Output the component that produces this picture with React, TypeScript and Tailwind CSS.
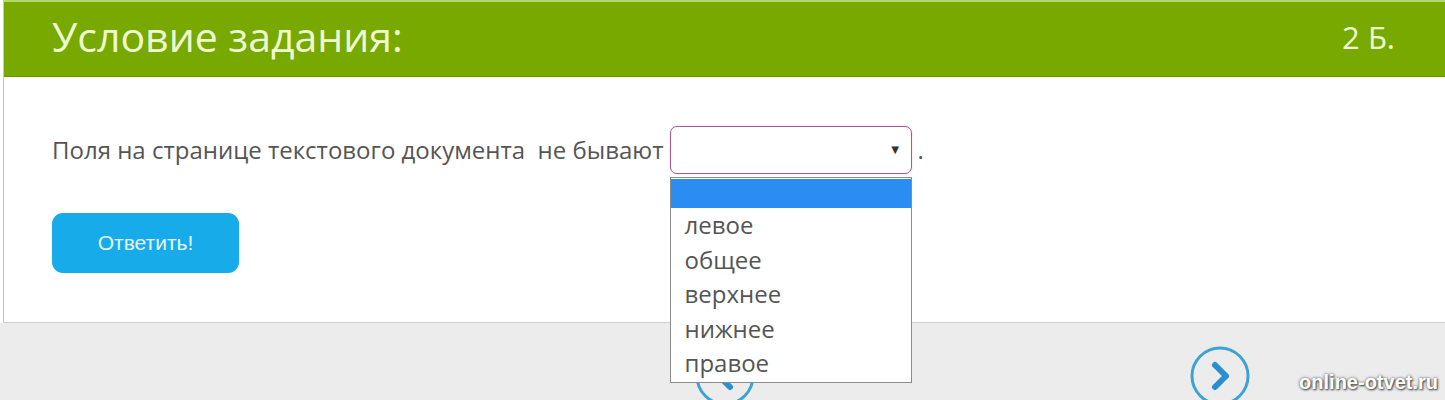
import React from "react";

function NavCircle({ dir }: { dir: "left" | "right" }) {
  return (
    <svg width="62" height="62" viewBox="0 0 62 62">
      <circle cx="31" cy="31" r="28" fill="none" stroke="#3ea3d3" strokeWidth="3" />
      {dir === "right" ? (
        <path d="M26 20 L37 31 L26 42" fill="none" stroke="#2a8fd0" strokeWidth="6" strokeLinecap="round" strokeLinejoin="round" />
      ) : (
        <path d="M36 20 L25 31 L36 42" fill="none" stroke="#2a8fd0" strokeWidth="6" strokeLinecap="round" strokeLinejoin="round" />
      )}
    </svg>
  );
}

export default function App() {
  const options = ["левое", "общее", "верхнее", "нижнее", "правое"];
  return (
    <div className="relative w-[1445px] h-[400px] overflow-hidden bg-[#ececec] font-['Open_Sans',sans-serif]">
      <div className="bg-white pl-[3px]">
        <div className="border-l border-[#c9c9c9] border-b border-b-[#d0d0d0]">
          <div className="h-[77px] bg-[#77a900] border-t-2 border-t-[#b5d86e] border-b border-b-[#6a9600] flex items-center justify-between pl-[48px] pr-[50px]">
            <span className="text-[41px] leading-none text-[#eefad2] pb-[6px]">Условие задания:</span>
            <span className="text-[31px] leading-none text-[#eefad2] pb-[4px]">2 Б.</span>
          </div>
          <div className="h-[245px] px-[48px] pt-[49px]">
            <div className="flex items-center h-[48px] text-[24px] text-[#555]">
              <span className="whitespace-pre">Поля на странице текстового документа  не бывают</span>
              <div className="relative ml-[6px]">
                <div className="w-[242px] h-[48px] border border-[#a75a90] rounded-[7px] bg-white flex items-center justify-end pr-[9px] shadow-[0_0_2px_#f0c8e4]">
                  <span className="text-[13px] text-[#333]">▼</span>
                </div>
                <div className="absolute left-0 top-[51px] w-[242px] border border-[#8c8c8c] bg-white z-10 pt-[1px] pb-[1px]">
                  <div className="h-[29px] bg-[#2b8cf1]" />
                  {options.map((o) => (
                    <div key={o} className="pl-[14px] text-[24px] leading-[34.5px] text-[#555]">
                      {o}
                    </div>
                  ))}
                </div>
              </div>
              <span className="ml-[6px]">.</span>
            </div>
            <button className="mt-[39px] w-[187px] h-[60px] rounded-[11px] bg-[#17abe9] text-[#e6f8ff] text-[21px] font-['Liberation_Sans',sans-serif]">
              Ответить!
            </button>
          </div>
        </div>
      </div>
      <div className="flex pl-[694px] pt-[22px]">
        <NavCircle dir="left" />
        <div className="ml-[433px]">
          <NavCircle dir="right" />
        </div>
      </div>
      <div className="absolute right-[7px] bottom-[3px] text-[20px] font-bold text-white font-['Liberation_Sans',sans-serif] [text-shadow:0_0_3px_#555,1px_1px_2px_#444]">
        online-otvet.ru
      </div>
    </div>
  );
}
